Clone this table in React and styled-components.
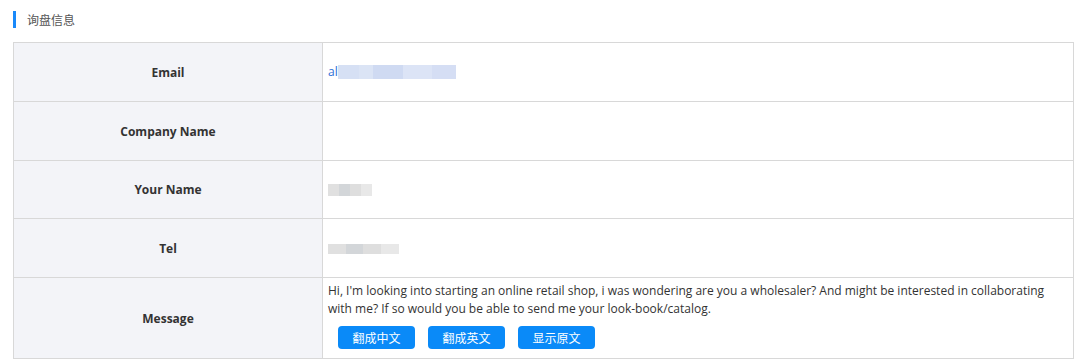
import styled, { createGlobalStyle } from 'styled-components';

const GlobalStyle = createGlobalStyle`
  body {
    margin: 0;
    background: #fff;
    font-family: 'Open Sans', 'Noto Sans CJK SC', sans-serif;
    color: #333;
  }
`;

const Page = styled.div`
  width: 1078px;
  padding: 0 4px 0 13px;
  box-sizing: border-box;
`;

const SectionTitle = styled.div`
  display: flex;
  align-items: center;
  height: 42px;
  font-size: 12px;
  color: #555;
  font-family: 'Noto Sans CJK SC', sans-serif;

  &::before {
    content: '';
    width: 3px;
    height: 17px;
    margin-right: 11px;
    margin-top: -4px;
    background: #1989fa;
  }

  span {
    margin-top: -4px;
  }
`;

const Table = styled.table`
  width: 1061px;
  border-collapse: collapse;
  table-layout: fixed;
  border: 1px solid #d8d8d8;
`;

const Row = styled.tr`
  height: ${(p) => p.$h || 59}px;
`;

const Label = styled.th`
  width: 306px;
  background: #f3f4f8;
  border: 1px solid #d8d8d8;
  font-size: 12px;
  font-weight: 700;
  color: #333;
  text-align: center;
  vertical-align: middle;
`;

const Value = styled.td`
  border: 1px solid #d8d8d8;
  padding: ${(p) => (p.$top ? '4px 5px 0' : '0 5px')};
  font-size: 12px;
  line-height: 18px;
  color: #333;
  vertical-align: ${(p) => (p.$top ? 'top' : 'middle')};
`;

const Link = styled.span`
  color: #2b6fd6;
  display: inline-flex;
  align-items: center;
`;

const Redacted = styled.span`
  display: inline-block;
  width: ${(p) => p.$w}px;
  height: ${(p) => p.$h || 14}px;
  background: ${(p) => p.$bg};
  vertical-align: middle;
`;

const Actions = styled.div`
  display: flex;
  gap: 13px;
  padding: 8px 0 0 10px;
`;

const Button = styled.button`
  width: 77px;
  height: 23px;
  border: none;
  border-radius: 4px;
  background: #0a8af8;
  color: #fff;
  font-size: 12px;
  font-family: 'Noto Sans CJK SC', sans-serif;
  padding: 0;
  cursor: pointer;
`;

const blueBlur =
  'linear-gradient(90deg, #d6e0f4 0 18%, #dbe4f5 18% 30%, #cfdaf2 30% 55%, #dce4f6 55% 80%, #d5def4 80% 100%)';
const grayBlur =
  'linear-gradient(90deg, #e0e0e0 0 25%, #d3d6d9 25% 50%, #dedede 50% 75%, #e8e8e8 75% 100%)';

export default function App() {
  return (
    <Page>
      <GlobalStyle />
      <SectionTitle>
        <span>询盘信息</span>
      </SectionTitle>
      <Table>
        <tbody>
          <Row>
            <Label>Email</Label>
            <Value>
              <Link>
                al
                <Redacted $w={118} $bg={blueBlur} />
              </Link>
            </Value>
          </Row>
          <Row>
            <Label>Company Name</Label>
            <Value />
          </Row>
          <Row $h={58}>
            <Label>Your Name</Label>
            <Value>
              <Redacted $w={44} $h={12} $bg={grayBlur} />
            </Value>
          </Row>
          <Row>
            <Label>Tel</Label>
            <Value>
              <Redacted $w={71} $h={10} $bg={grayBlur} />
            </Value>
          </Row>
          <Row $h={81}>
            <Label>Message</Label>
            <Value $top>
              Hi, I'm looking into starting an online retail shop, i was wondering are you a
              wholesaler? And might be interested in collaborating with me? If so would you be
              able to send me your look-book/catalog.
              <Actions>
                <Button>翻成中文</Button>
                <Button>翻成英文</Button>
                <Button>显示原文</Button>
              </Actions>
            </Value>
          </Row>
        </tbody>
      </Table>
    </Page>
  );
}
